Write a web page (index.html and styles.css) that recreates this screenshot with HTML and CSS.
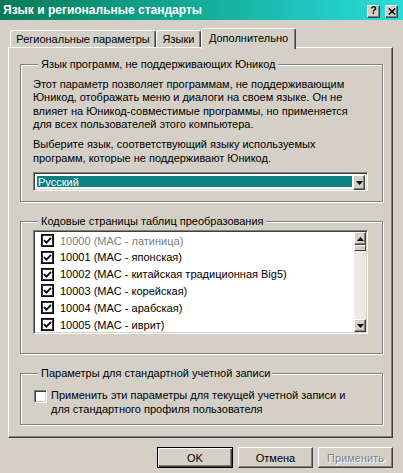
FILE: index.html
```html
<!DOCTYPE html>
<html lang="ru">
<head>
<meta charset="utf-8">
<title>Язык и региональные стандарты</title>
<link rel="stylesheet" href="styles.css">
</head>
<body>
<div class="window">
  <div class="titlebar">
    <span class="title">Язык и региональные стандарты</span>
    <div class="tbtns">
      <span class="tbtn help">?</span>
      <span class="tbtn close"><svg width="8" height="7" viewBox="0 0 8 7"><path d="M0.8 0.5 L7.2 6.5 M7.2 0.5 L0.8 6.5" stroke="#000" stroke-width="1.6" fill="none"/></svg></span>
    </div>
  </div>
  <div class="main">
    <div class="tabs">
      <div class="tab t1">Региональные параметры</div>
      <div class="tab t2">Языки</div>
      <div class="tab t3 active">Дополнительно</div>
    </div>
    <div class="panel">
      <div class="group g1">
        <div class="gtitle">Язык программ, не поддерживающих Юникод</div>
        <p class="para p1">Этот параметр позволяет программам, не поддерживающим<br>Юникод, отображать меню и диалоги на своем языке. Он не<br>влияет на Юникод-совместимые программы, но применяется<br>для всех пользователей этого компьютера.</p>
        <p class="para p2">Выберите язык, соответствующий языку используемых<br>программ, которые не поддерживают Юникод.</p>
        <div class="combo">
          <div class="combo-field"><span class="sel">Русский</span></div>
          <div class="sbtn ddbtn"><svg width="7" height="4" viewBox="0 0 7 4"><path d="M0 0 H7 L3.5 4 Z" fill="#000"/></svg></div>
        </div>
      </div>
      <div class="group g2">
        <div class="gtitle">Кодовые страницы таблиц преобразования</div>
        <div class="list">
          <div class="items">
            <div class="item disabled"><span class="lcheck"><svg width="9" height="9" viewBox="0 0 9 9"><path d="M1 4.2 L3.4 6.6 L8 1.8" stroke="#000" stroke-width="1.9" fill="none"/></svg></span><span>10000 (MAC - латиница)</span></div>
            <div class="item"><span class="lcheck"><svg width="9" height="9" viewBox="0 0 9 9"><path d="M1 4.2 L3.4 6.6 L8 1.8" stroke="#000" stroke-width="1.9" fill="none"/></svg></span><span>10001 (MAC - японская)</span></div>
            <div class="item"><span class="lcheck"><svg width="9" height="9" viewBox="0 0 9 9"><path d="M1 4.2 L3.4 6.6 L8 1.8" stroke="#000" stroke-width="1.9" fill="none"/></svg></span><span>10002 (MAC - китайская традиционная Big5)</span></div>
            <div class="item"><span class="lcheck"><svg width="9" height="9" viewBox="0 0 9 9"><path d="M1 4.2 L3.4 6.6 L8 1.8" stroke="#000" stroke-width="1.9" fill="none"/></svg></span><span>10003 (MAC - корейская)</span></div>
            <div class="item"><span class="lcheck"><svg width="9" height="9" viewBox="0 0 9 9"><path d="M1 4.2 L3.4 6.6 L8 1.8" stroke="#000" stroke-width="1.9" fill="none"/></svg></span><span>10004 (MAC - арабская)</span></div>
            <div class="item"><span class="lcheck"><svg width="9" height="9" viewBox="0 0 9 9"><path d="M1 4.2 L3.4 6.6 L8 1.8" stroke="#000" stroke-width="1.9" fill="none"/></svg></span><span>10005 (MAC - иврит)</span></div>
          </div>
          <div class="scroll">
            <div class="sbtn"><svg width="7" height="4" viewBox="0 0 7 4"><path d="M0 4 H7 L3.5 0 Z" fill="#000"/></svg></div>
            <div class="thumb"></div>
            <div class="track"></div>
            <div class="sbtn"><svg width="7" height="4" viewBox="0 0 7 4"><path d="M0 0 H7 L3.5 4 Z" fill="#000"/></svg></div>
          </div>
        </div>
      </div>
      <div class="group g3">
        <div class="gtitle">Параметры для стандартной учетной записи</div>
        <div class="checkrow">
          <span class="check"></span>
          <span class="checklabel">Применить эти параметры для текущей учетной записи и<br>для стандартного профиля пользователя</span>
        </div>
      </div>
    </div>
    <div class="buttons">
      <div class="btn default">OK</div>
      <div class="btn">Отмена</div>
      <div class="btn disabled">Применить</div>
    </div>
  </div>
</div>
</body>
</html>
```
FILE: styles.css
```css
* { box-sizing: border-box; }
html, body { margin: 0; padding: 0; }
body {
  width: 403px;
  height: 473px;
  overflow: hidden;
  background: #d4d0c8;
  font-family: "Liberation Sans", Arial, sans-serif;
  font-size: 11px;
  color: #000;
}
.window {
  width: 403px;
  height: 473px;
  background: #d4d0c8;
  display: flex;
  flex-direction: column;
}
.titlebar {
  height: 20px;
  flex: none;
  display: flex;
  align-items: center;
  justify-content: space-between;
  padding: 0 5px 0 3px;
  background: linear-gradient(90deg, #087a56 0%, #12a894 45%, #2adcdc 100%);
}
.title {
  color: #fff;
  font-weight: bold;
  font-size: 12px;
  white-space: nowrap;
}
.tbtns { display: flex; gap: 5px; margin-top: 2px; }
.tbtn {
  width: 13px;
  height: 13px;
  background: #d4d0c8;
  border: 1px solid;
  border-color: #fff #404040 #404040 #fff;
  box-shadow: inset -1px -1px 0 #808080;
  display: flex;
  align-items: center;
  justify-content: center;
}
.help { font-weight: bold; font-size: 10px; line-height: 1; }
.main {
  flex: 1;
  display: flex;
  flex-direction: column;
  padding: 8px 10px 0 8px;
}
.tabs {
  height: 19px;
  display: flex;
  align-items: flex-end;
  padding-left: 2px;
  position: relative;
  z-index: 1;
}
.tab {
  height: 17px;
  display: flex;
  align-items: center;
  justify-content: center;
  white-space: nowrap;
  background: #d4d0c8;
  border: 1px solid;
  border-bottom: none;
  border-color: #fff #404040 transparent #fff;
  box-shadow: inset -1px 0 0 #808080;
  border-radius: 3px 3px 0 0;
}
.t1 { width: 146px; }
.t2 { width: 45px; }
.t3 { width: 95px; }
.tab.active {
  height: 21px;
  margin-bottom: -2px;
  padding-bottom: 3px;
}
.panel {
  height: 391px;
  display: flex;
  flex-direction: column;
  padding: 0 9px 0 11px;
  background: #d4d0c8;
  border: 1px solid;
  border-color: #fff #404040 #404040 #fff;
  box-shadow: inset -1px -1px 0 #808080;
}
.group {
  display: flex;
  flex-direction: column;
  border: 1px solid #808080;
  box-shadow: inset 1px 1px 0 #fff, 1px 1px 0 #fff;
  padding: 0 14px 0 12px;
}
.gtitle {
  align-self: flex-start;
  margin: -7px 0 0 5px;
  padding: 0 2px 0 3px;
  line-height: 13px;
  background: #d4d0c8;
  white-space: nowrap;
}
.g1 { margin-top: 16px; padding-bottom: 10px; }
.g2 { margin-top: 19px; padding-bottom: 19px; }
.g3 { margin-top: 19px; padding-bottom: 8px; }
.para {
  margin: 0;
  line-height: 13.4px;
  white-space: nowrap;
}
.p1 { margin-top: 7px; }
.p2 { margin-top: 6.7px; }
.combo {
  margin-top: 7px;
  height: 19px;
  display: flex;
  padding: 2px;
  background: #fff;
  border: 1px solid;
  border-color: #808080 #fff #fff #808080;
  box-shadow: inset 1px 1px 0 #404040, inset -1px -1px 0 #d4d0c8;
}
.combo-field { flex: 1; display: flex; padding: 1px; }
.sel {
  flex: 1;
  background: #0a8282;
  color: #fff;
  padding-left: 1px;
  line-height: 13px;
}
.sbtn {
  width: 12px;
  height: 13px;
  flex: none;
  display: flex;
  align-items: center;
  justify-content: center;
  background: #d4d0c8;
  border: 1px solid;
  border-color: #fff #404040 #404040 #fff;
  box-shadow: inset -1px -1px 0 #808080;
}
.ddbtn { height: 15px; }
.list {
  margin-top: 2px;
  height: 104px;
  display: flex;
  padding: 1px;
  background: #fff;
  border: 1px solid;
  border-color: #808080 #fff #fff #808080;
  box-shadow: inset 1px 1px 0 #404040, inset -1px -1px 0 #d4d0c8;
}
.items { flex: 1; overflow: hidden; }
.item {
  height: 16.8px;
  display: flex;
  align-items: center;
  gap: 6px;
  padding-left: 6px;
  white-space: nowrap;
}
.item.disabled { color: #808080; }
.lcheck {
  width: 13px;
  height: 13px;
  flex: none;
  display: flex;
  align-items: center;
  justify-content: center;
  background: #fff;
  border: 1px solid #000;
  box-shadow: inset 0 0 0 1px #333;
}
.scroll {
  width: 12px;
  display: flex;
  flex-direction: column;
  background: #eceae6;
}
.thumb {
  height: 6px;
  background: #d4d0c8;
  border: 1px solid;
  border-color: #fff #404040 #404040 #fff;
}
.track { flex: 1; }
.checkrow {
  margin-top: 9px;
  display: flex;
  align-items: flex-start;
  gap: 4px;
  padding-left: 1px;
}
.check {
  width: 13px;
  height: 13px;
  flex: none;
  margin-top: 1px;
  background: #fff;
  border: 1px solid;
  border-color: #808080 #fff #fff #808080;
  box-shadow: inset 1px 1px 0 #404040, inset -1px -1px 0 #d4d0c8;
}
.checklabel { line-height: 13.4px; white-space: nowrap; }
.buttons {
  margin-top: 9px;
  display: flex;
  justify-content: flex-end;
  gap: 5px;
}
.btn {
  width: 75px;
  height: 21px;
  display: flex;
  align-items: center;
  justify-content: center;
  background: #d4d0c8;
  border: 1px solid;
  border-color: #fff #404040 #404040 #fff;
  box-shadow: inset -1px -1px 0 #808080;
}
.btn.default {
  width: 76px;
  border-color: #000;
  box-shadow: inset 1px 1px 0 #fff, inset -1px -1px 0 #404040, inset -2px -2px 0 #808080;
}
.btn.disabled {
  color: #808080;
  text-shadow: 1px 1px 0 #fff;
}
```
